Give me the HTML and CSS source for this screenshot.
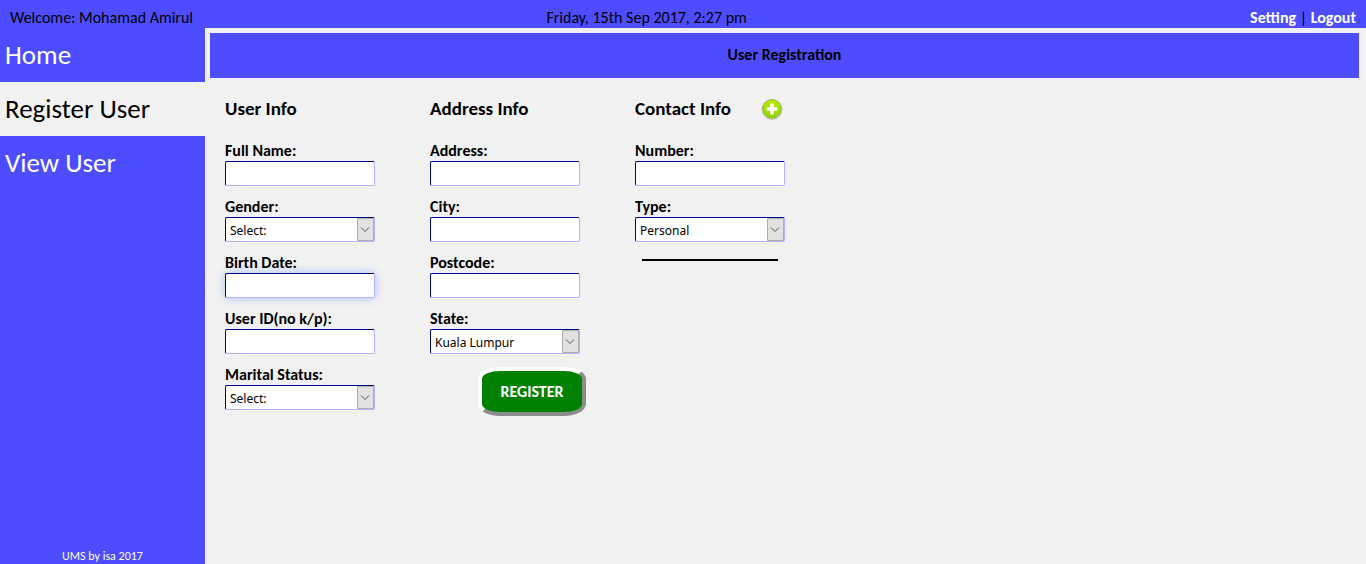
FILE: index.html
```html
<!DOCTYPE html>
<html lang="en">
<head>
<meta charset="utf-8">
<title>User Registration</title>
<link rel="stylesheet" href="styles.css">
</head>
<body>
<header class="topbar">
  <span class="welcome">Welcome: Mohamad Amirul</span>
  <span class="date">Friday, 15th Sep 2017, 2:27 pm</span>
  <span class="links"><a href="#setting">Setting</a> | <a href="#logout">Logout</a></span>
</header>
<div class="shell">
  <aside class="sidebar">
    <nav class="menu">
      <a class="menu-item" href="#home">Home</a>
      <a class="menu-item active" href="#register">Register User</a>
      <a class="menu-item" href="#view">View User</a>
    </nav>
    <footer class="credit">UMS by isa 2017</footer>
  </aside>
  <main class="content">
    <h1 class="banner">User Registration</h1>
    <form class="form">
      <section class="column">
        <h2 class="column-title">User Info</h2>
        <div class="field"><label for="name">Full Name:</label><input class="control" id="name" type="text"></div>
        <div class="field"><label for="gender">Gender:</label><span class="picker"><select class="control" id="gender"><option>Select:</option></select><svg class="arrow" viewBox="0 0 17 23" aria-hidden="true"><path d="M.5.5h16v22H.5z"/><path d="M4 9.500l4 4 4-4"/></svg></span></div>
        <div class="field"><label for="birth">Birth Date:</label><input class="control glow" id="birth" type="text"></div>
        <div class="field"><label for="userid">User ID(no k/p):</label><input class="control" id="userid" type="text"></div>
        <div class="field"><label for="marital">Marital Status:</label><span class="picker"><select class="control" id="marital"><option>Select:</option></select><svg class="arrow" viewBox="0 0 17 23" aria-hidden="true"><path d="M.5.5h16v22H.5z"/><path d="M4 9.500l4 4 4-4"/></svg></span></div>
      </section>
      <section class="column">
        <h2 class="column-title">Address Info</h2>
        <div class="field"><label for="address">Address:</label><input class="control" id="address" type="text"></div>
        <div class="field"><label for="city">City:</label><input class="control" id="city" type="text"></div>
        <div class="field"><label for="postcode">Postcode:</label><input class="control" id="postcode" type="text"></div>
        <div class="field"><label for="state">State:</label><span class="picker"><select class="control" id="state"><option>Kuala Lumpur</option></select><svg class="arrow" viewBox="0 0 17 23" aria-hidden="true"><path d="M.5.5h16v22H.5z"/><path d="M4 9.500l4 4 4-4"/></svg></span></div>
        <button class="register" type="button">REGISTER</button>
      </section>
      <section class="column">
        <div class="title-row">
          <h2 class="column-title">Contact Info</h2>
          <button class="add" type="button" aria-label="Add contact">
            <svg viewBox="0 0 22 22" aria-hidden="true">
              <defs><linearGradient id="lime" x1="0" y1="0" x2="0" y2="1"><stop offset="0" stop-color="#b9ef00"/><stop offset="1" stop-color="#8fce00"/></linearGradient></defs>
              <circle cx="11" cy="11.500" r="10.500" fill="#bdbdc2"/>
              <circle cx="11" cy="11" r="10.200" fill="#e2e2e2"/>
              <circle cx="11" cy="11" r="9.300" fill="url(#lime)" stroke="#86b31b" stroke-width=".8"/>
              <path d="M11 5.500v11M5.500 11h11" stroke="#fff" stroke-width="3.500"/>
            </svg>
          </button>
        </div>
        <div class="field"><label for="number">Number:</label><input class="control" id="number" type="text"></div>
        <div class="field"><label for="type">Type:</label><span class="picker"><select class="control" id="type"><option>Personal</option></select><svg class="arrow" viewBox="0 0 17 23" aria-hidden="true"><path d="M.5.5h16v22H.5z"/><path d="M4 9.500l4 4 4-4"/></svg></span></div>
        <hr class="divider">
      </section>
    </form>
  </main>
</div>
</body>
</html>
```
FILE: styles.css
```css
* { box-sizing: border-box; }

body {
  margin: 0;
  min-height: 100vh;
  display: flex;
  flex-direction: column;
  background: #f1f1f1;
  color: #000;
  font-family: Carlito, Lato, sans-serif;
  font-size: 16px;
  line-height: 20px;
}

a { color: #fff; text-decoration: none; }

.topbar {
  display: grid;
  grid-template-columns: 40% 1fr auto;
  padding: 8px 0 0;
  background: #4d4dff;
}
.welcome { padding-left: 10px; }
.links { padding-right: 10px; }
.links a { font-weight: bold; }

.shell { flex: 1; display: flex; }

.sidebar {
  flex: 0 0 205px;
  display: flex;
  flex-direction: column;
  justify-content: space-between;
  background: #4d4dff;
}
.menu-item {
  display: block;
  padding: 12px 5px;
  font-size: 27px;
  line-height: 30px;
}
.menu-item.active { background: #f1f1f1; color: #000; }
.credit {
  color: #fff;
  font-size: 12px;
  line-height: 16px;
  text-align: center;
}

.content { flex: 1; padding: 5px 7px 0 5px; }
.banner {
  margin: 0;
  padding: 11px 0 12px;
  background: #4d4dff;
  font-size: 16px;
  line-height: 22px;
  text-align: center;
}

.form {
  display: flex;
  flex-wrap: wrap;
  gap: 55px;
  padding: 20px 15px;
}
.column { width: 150px; }
.column-title {
  margin: 0 0 21px;
  font-size: 19px;
  line-height: 22px;
  white-space: nowrap;
}
.title-row { display: flex; justify-content: space-between; }
.add {
  width: 22px;
  height: 22px;
  margin-right: 2px;
  padding: 0;
  border: 0;
  background: none;
}
.add svg { display: block; }

.field { margin-bottom: 11px; }
.field label {
  display: block;
  font-weight: bold;
}
.control {
  display: block;
  appearance: none;
  width: 100%;
  height: 25px;
  padding: 1px 4px 0;
  border: 1px solid;
  border-color: #00008b #b3b3ff #b3b3ff #00008b;
  border-radius: 2px;
  background: #fff;
  color: #000;
  font: 12px "Noto Sans", sans-serif;
}
.glow { box-shadow: 0 0 10px #a6c1f8; }
.picker { display: block; position: relative; }
.arrow {
  position: absolute;
  top: 1px;
  right: 1px;
  width: 17px;
  height: 23px;
  fill: #e1e1e1;
  stroke: #adadad;
  pointer-events: none;
}
.arrow path + path { fill: none; stroke: #555; }

.register {
  display: block;
  width: 108px;
  height: 49px;
  margin: 13px 0 0 48px;
  padding: 0;
  border: 4px solid;
  border-color: #fff #8c8c8c #8c8c8c #fff;
  border-radius: 22px / 12px;
  background: #008000;
  color: #fff;
  font: bold 16px Carlito, Lato, sans-serif;
}

.divider {
  width: 136px;
  height: 2px;
  margin: 17px auto 0;
  border: 0;
  background: #000;
}
```
